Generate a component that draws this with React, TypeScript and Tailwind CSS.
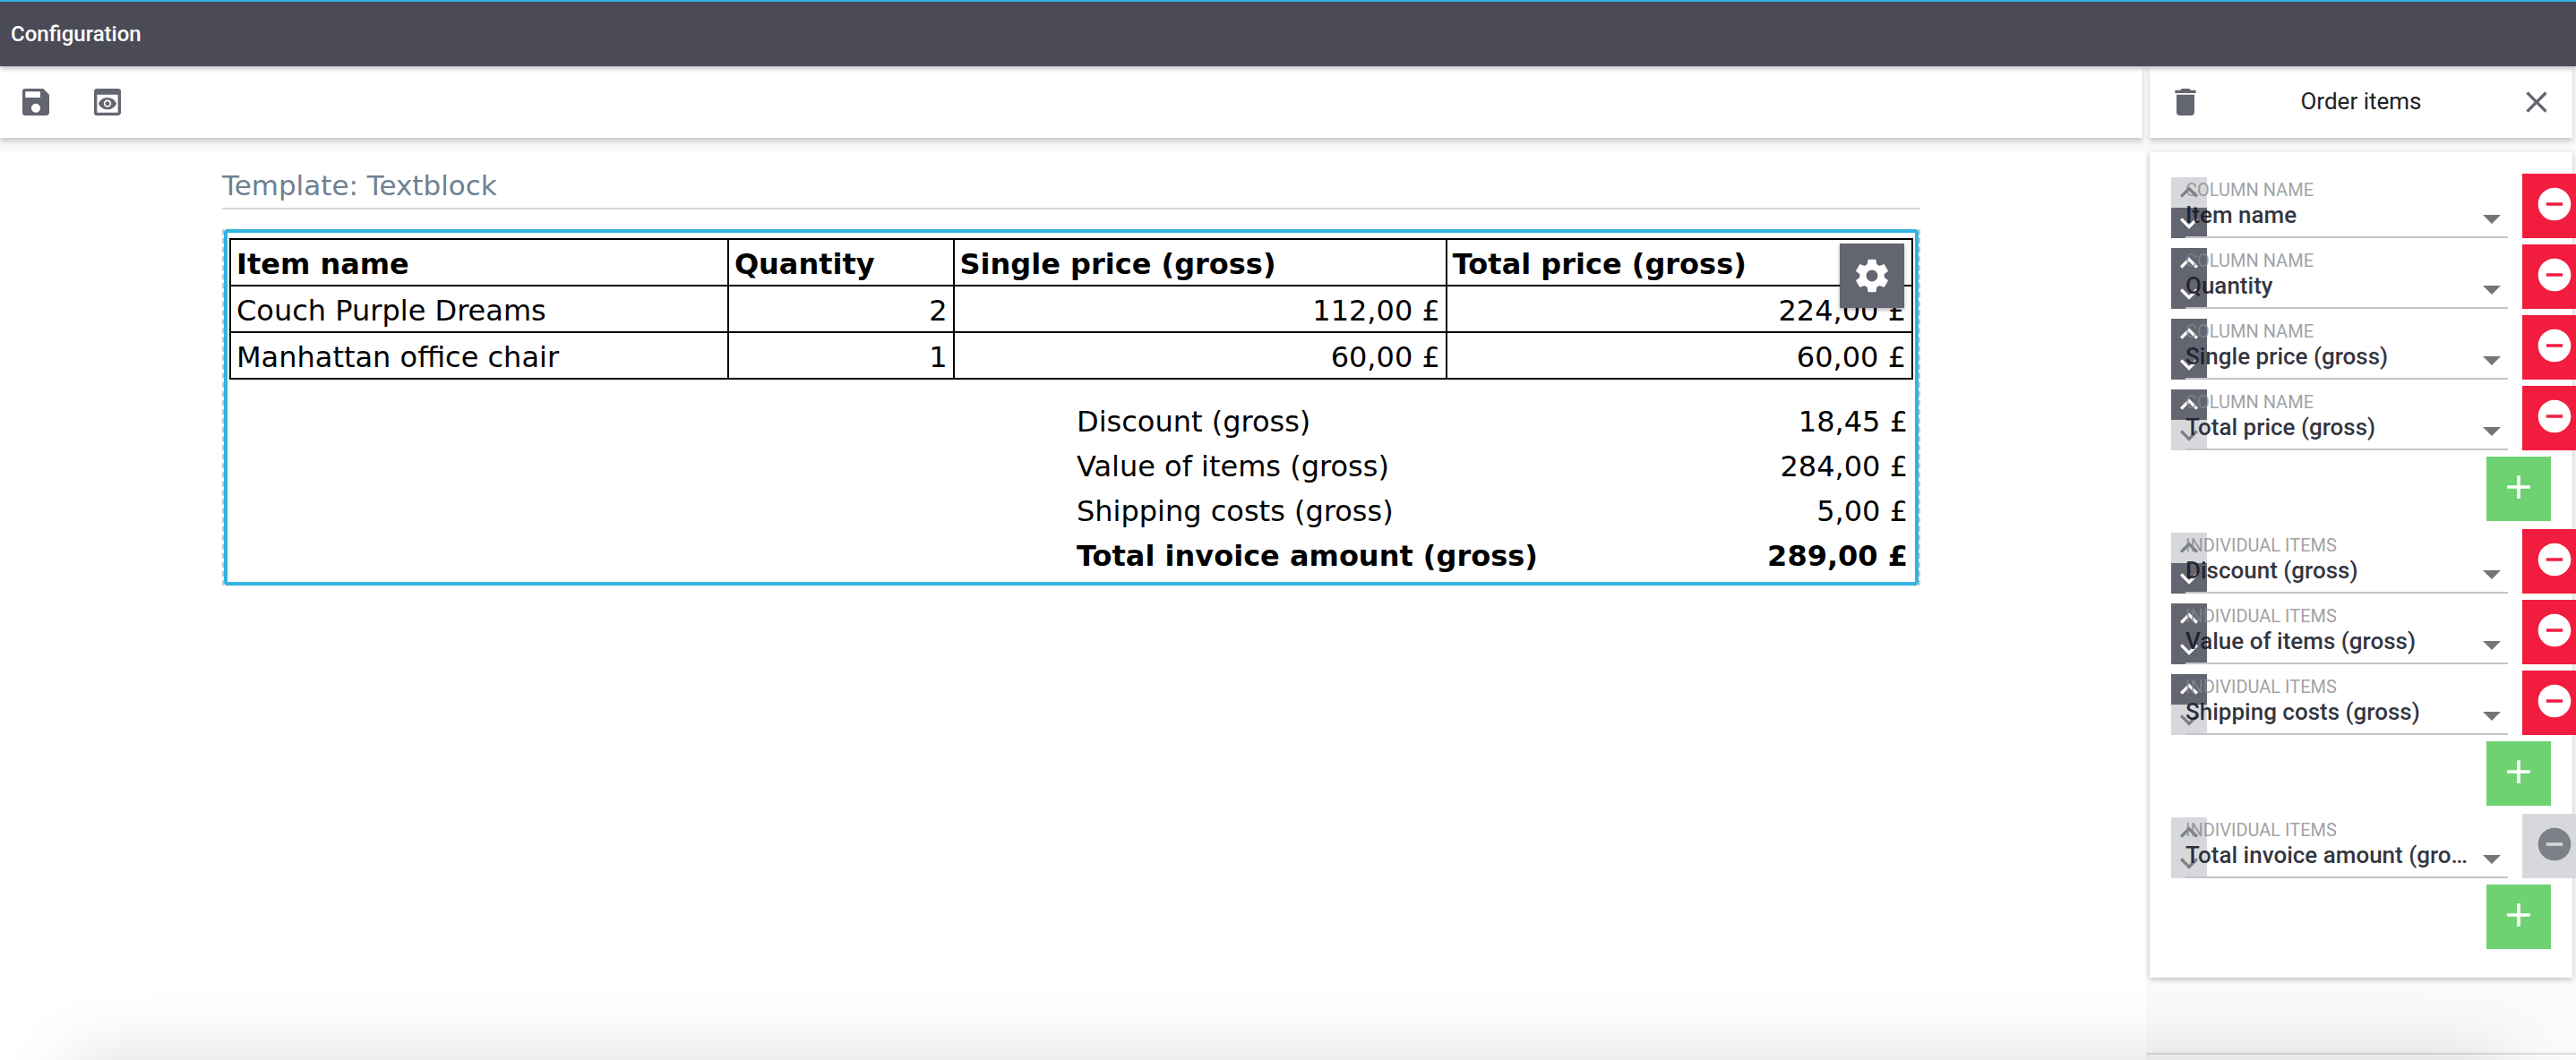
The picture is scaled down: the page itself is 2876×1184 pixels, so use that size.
import { useId } from "react";
import {
  MdAdd,
  MdClose,
  MdDelete,
  MdExpandLess,
  MdExpandMore,
  MdPreview,
  MdRemoveCircle,
  MdSave,
} from "react-icons/md";

type FieldRow = { value: string; up: boolean; down: boolean; removable: boolean };
type FieldGroup = { label: string; rows: FieldRow[] };

const groups: FieldGroup[] = [
  {
    label: "COLUMN NAME",
    rows: [
      { value: "Item name", up: false, down: true, removable: true },
      { value: "Quantity", up: true, down: true, removable: true },
      { value: "Single price (gross)", up: true, down: true, removable: true },
      { value: "Total price (gross)", up: true, down: false, removable: true },
    ],
  },
  {
    label: "INDIVIDUAL ITEMS",
    rows: [
      { value: "Discount (gross)", up: false, down: true, removable: true },
      { value: "Value of items (gross)", up: true, down: true, removable: true },
      { value: "Shipping costs (gross)", up: true, down: false, removable: true },
    ],
  },
  {
    label: "INDIVIDUAL ITEMS",
    rows: [{ value: "Total invoice amount (gross)", up: false, down: false, removable: false }],
  },
];

const items = [
  ["Couch Purple Dreams", "2", "112,00 £", "224,00 £"],
  ["Manhattan office chair", "1", "60,00 £", "60,00 £"],
];

const totals = [
  ["Discount (gross)", "18,45 £"],
  ["Value of items (gross)", "284,00 £"],
  ["Shipping costs (gross)", "5,00 £"],
];

function GearIcon() {
  return (
    <svg viewBox="0 0 24 24" className="size-11" fill="currentColor" aria-hidden="true">
      <path d="M19.43 12.98c.04-.32.07-.64.07-.98s-.03-.66-.07-.98l2.11-1.65c.19-.15.24-.42.12-.64l-2-3.46c-.12-.22-.39-.3-.61-.22l-2.49 1c-.52-.4-1.08-.73-1.69-.98l-.38-2.65C14.46 2.18 14.25 2 14 2h-4c-.25 0-.46.18-.49.42l-.38 2.65c-.61.25-1.17.59-1.69.98l-2.49-1c-.23-.09-.49 0-.61.22l-2 3.46c-.13.22-.07.49.12.64l2.11 1.65c-.04.32-.07.65-.07.98s.03.66.07.98l-2.11 1.65c-.19.15-.24.42-.12.64l2 3.46c.12.22.39.3.61.22l2.49-1c.52.4 1.08.73 1.69.98l.38 2.65c.03.24.24.42.49.42h4c.25 0 .46-.18.49-.42l.38-2.65c.61-.25 1.17-.59 1.69-.98l2.49 1c.23.09.49 0 .61-.22l2-3.46c.12-.22.07-.49-.12-.64l-2.11-1.65zM12 15.5c-1.93 0-3.5-1.57-3.5-3.5s1.57-3.5 3.5-3.5 3.5 1.57 3.5 3.5-1.57 3.5-3.5 3.5z" />
    </svg>
  );
}

function MoveButton({ label, enabled, up }: { label: string; enabled: boolean; up: boolean }) {
  const Icon = up ? MdExpandLess : MdExpandMore;
  return (
    <button
      type="button"
      aria-label={label}
      disabled={!enabled}
      className="flex h-[34px] items-center justify-center bg-[#636571] text-white disabled:bg-[#d7d8dc] disabled:text-[#7e8087]"
    >
      <Icon className="size-10 shrink-0" />
    </button>
  );
}

function SettingRow({ label, row }: { label: string; row: FieldRow }) {
  const id = useId();
  return (
    <div className="flex h-[72px]">
      <div className="-mr-6 flex w-10 shrink-0 flex-col self-end">
        <MoveButton up label={`Move ${row.value} up`} enabled={row.up} />
        <MoveButton up={false} label={`Move ${row.value} down`} enabled={row.down} />
      </div>
      <div className="relative z-10 min-w-0 flex-1 border-b-2 border-[#c4c4cb] pt-[6px]">
        <label htmlFor={id} className="block text-xl leading-6 text-[#86888d]/80">
          {label}
        </label>
        <select
          id={id}
          defaultValue={row.value}
          className="block h-8 w-full appearance-none overflow-hidden bg-transparent pr-11 text-[26px] leading-8 font-medium text-ellipsis whitespace-nowrap text-[#181926]/90"
        >
          <option>{row.value}</option>
        </select>
        <svg
          viewBox="0 0 20 10"
          className="pointer-events-none absolute right-2 bottom-[14px] h-[10px] w-5"
          aria-hidden="true"
        >
          <path d="M0 0h20L10 10z" fill="#757575" />
        </svg>
      </div>
      <button
        type="button"
        aria-label={`Remove ${row.value}`}
        disabled={!row.removable}
        className="ml-4 flex w-[72px] shrink-0 items-center justify-center bg-[#f21c3f] pb-1 text-white disabled:bg-[#d7d8dc] disabled:text-[#7e8087]"
      >
        <MdRemoveCircle className="size-11" />
      </button>
    </div>
  );
}

function Sidebar() {
  return (
    <aside className="relative mr-1 flex w-[472px] shrink-0 flex-col gap-4">
      <div className="flex h-20 items-center justify-between bg-white px-5 shadow-[0_4px_6px_rgba(0,0,0,0.2)]">
        <button type="button" aria-label="Delete" className="text-[#636571]">
          <MdDelete className="size-10" />
        </button>
        <h2 className="pb-[2px] text-[26px] leading-8 text-[#212121]">Order items</h2>
        <button type="button" aria-label="Close" className="text-[#636571]">
          <MdClose className="size-10" />
        </button>
      </div>
      <div className="flex flex-col gap-[9px] bg-white pt-6 pb-8 pl-6 shadow-[0_2px_6px_rgba(0,0,0,0.25)]">
        {groups.map((group, index) => (
          <section key={index} className="-mr-4 flex flex-col gap-[7px]">
            {group.rows.map((row) => (
              <SettingRow key={row.value} label={group.label} row={row} />
            ))}
            <button
              type="button"
              aria-label={`Add to ${group.label.toLowerCase()}`}
              className="mr-10 flex size-[72px] items-center justify-center self-end bg-[#6fd272] pb-1 text-white"
            >
              <MdAdd className="size-11" />
            </button>
          </section>
        ))}
      </div>
      <div className="-mr-1 mt-auto -ml-1 h-2 border-t-2 border-[#dedede]" />
    </aside>
  );
}

function Invoice() {
  return (
    <div className="border-x-2 border-dashed border-[#cccccc]">
      <div className="relative rounded border-4 border-[#31b4e0] px-[2px] pt-[6px] pb-1 shadow-[0_0_2px_rgba(0,0,0,0.2)]">
        <table className="w-full table-fixed border-collapse">
          <colgroup>
            <col className="w-[29.6%]" />
            <col className="w-[13.4%]" />
            <col className="w-[29.3%]" />
            <col />
          </colgroup>
          <thead>
            <tr className="h-[52px]">
              {["Item name", "Quantity", "Single price (gross)", "Total price (gross)"].map((head) => (
                <th key={head} scope="col" className="border-2 border-black px-[6px] pt-[3px] text-left font-bold">
                  {head}
                </th>
              ))}
            </tr>
          </thead>
          <tbody>
            {items.map((cells) => (
              <tr key={cells[0]} className="h-[52px]">
                {cells.map((cell, index) => (
                  <td
                    key={index}
                    className="border-2 border-black px-[6px] pt-[3px] text-right first:text-left"
                  >
                    {cell}
                  </td>
                ))}
              </tr>
            ))}
          </tbody>
        </table>
        <table className="mt-[22px] ml-auto w-1/2">
          <tbody>
            {totals.map(([name, value]) => (
              <tr key={name} className="h-[50px]">
                <th scope="row" className="px-[6px] text-left font-normal">{name}</th>
                <td className="px-[6px] text-right">{value}</td>
              </tr>
            ))}
            <tr className="h-[50px] font-bold">
              <th scope="row" className="px-[6px] text-left">Total invoice amount (gross)</th>
              <td className="px-[6px] text-right">289,00 £</td>
            </tr>
          </tbody>
        </table>
        <button
          type="button"
          aria-label="Settings"
          className="absolute top-3 right-3 flex size-[72px] items-center justify-center bg-[#636571] text-white shadow-[0_2px_4px_rgba(0,0,0,0.3)]"
        >
          <GearIcon />
        </button>
      </div>
    </div>
  );
}

export default function App() {
  return (
    <div className="relative flex min-h-screen flex-col overflow-hidden bg-[#fafafa] font-[Roboto,sans-serif]">
      <header className="relative z-20 flex h-[74px] items-center border-t-2 border-[#2fb4e0] bg-[#4a4b57] px-3 shadow-[0_2px_6px_rgba(0,0,0,0.3)]">
        <h1 className="text-2xl font-medium text-white">Configuration</h1>
      </header>
      <div className="flex flex-1">
        <div className="mr-1 flex min-w-0 flex-1 flex-col gap-4">
          <div className="mr-1 flex h-20 items-center gap-10 bg-white px-5 shadow-[0_4px_6px_rgba(0,0,0,0.2)]">
            <button type="button" aria-label="Save" className="text-[#636571]">
              <MdSave className="size-10" />
            </button>
            <button type="button" aria-label="Preview" className="text-[#636571]">
              <MdPreview className="size-10" />
            </button>
          </div>
          <main className="flex-1 bg-white pt-4 pr-[252px] pl-[248px] font-['DejaVu_Sans',sans-serif] text-[32px] leading-10 text-black">
            <h2 className="mb-[22px] border-b-2 border-[#d7d7dc] pb-1 text-[31px] leading-[42px] text-[#708090]">
              Template: Textblock
            </h2>
            <Invoice />
          </main>
        </div>
        <Sidebar />
      </div>
      <div className="pointer-events-none absolute inset-x-20 top-full h-40 shadow-[0_0_80px_rgba(0,0,0,0.15)]" />
    </div>
  );
}
